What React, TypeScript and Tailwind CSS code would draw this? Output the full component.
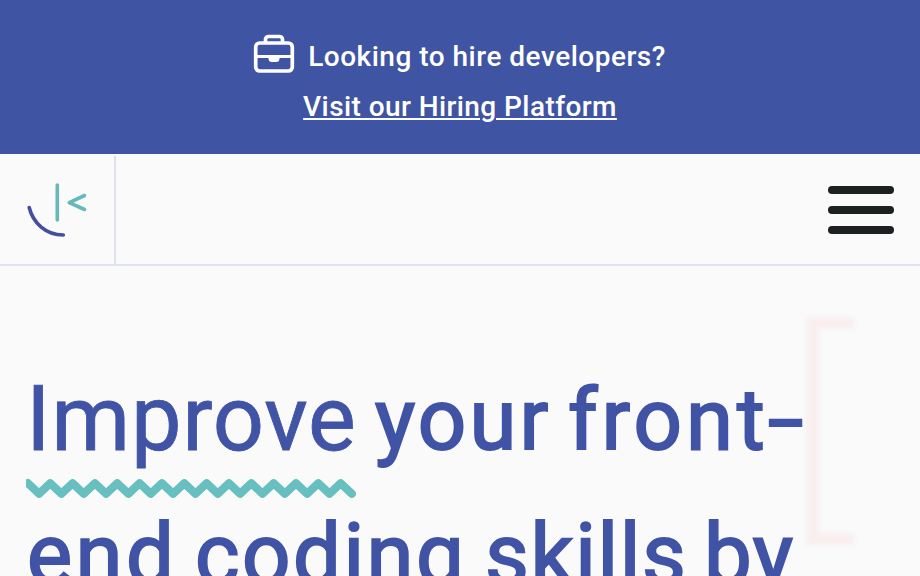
function Briefcase() {
  return (
    <svg className="relative -left-px top-px" width="42" height="40" viewBox="0 0 42 40" fill="none" stroke="white" strokeWidth="3.7" strokeLinejoin="round">
      <rect x="2.7" y="9" width="36.6" height="28" rx="4" />
      <path d="M12.5 9V5.5a3 3 0 0 1 3-3h11a3 3 0 0 1 3 3V9" />
      <path d="M2.7 22.5h36.6" strokeWidth="3" />
      <path d="M15.5 23h11v1.5a3.5 3.5 0 0 1-3.5 3.5h-4a3.5 3.5 0 0 1-3.5-3.5z" fill="white" stroke="none" />
    </svg>
  );
}

function Logo() {
  return (
    <svg className="block" width="114" height="108" viewBox="0 156 114 108" fill="none" strokeLinecap="round" strokeLinejoin="round" strokeWidth="3.6">
      <path d="M57.3 185V220" stroke="#67b8b9" />
      <path d="M84.5 195.5L69.3 202.7L84.5 209.5" stroke="#67b8b9" />
      <path d="M29.2 207.5C33 223 46 235 63.3 235" stroke="#434da2" />
    </svg>
  );
}

function ZigZag() {
  const points = Array.from({ length: 30 }, (_, i) => `${1.9 + i * 11.17},${i % 2 ? 15.7 : 5.2}`).join(' ');
  return (
    <svg className="absolute left-[26px] top-[212px]" width="331" height="22" viewBox="0 0 331 22">
      <polyline points={points} fill="none" stroke="#67bfc0" strokeWidth="8.2" strokeLinecap="round" strokeLinejoin="round" />
    </svg>
  );
}

export default function App() {
  return (
    <div className="h-[576px] w-full overflow-hidden bg-[#fafafb] font-['Roboto',sans-serif]">
      <div className="flex h-[154px] flex-col items-center bg-[#3f54a3] pt-[33px] font-medium text-white">
        <div className="flex h-[48px] items-start gap-[13px] text-[28px] leading-[48px] tracking-[0.5px]">
          <Briefcase />
          <span className="-ml-px">Looking to hire developers?</span>
        </div>
        <a className="text-[28px] leading-[52px] tracking-[0.42px] underline decoration-2 underline-offset-[2px]">Visit our Hiring Platform</a>
      </div>
      <header className="flex h-[112px] items-center justify-between border-b-2 border-[#dde3e8] pt-[2px]">
        <div className="h-full w-[116px] border-r-2 border-[#dde3e8]">
          <Logo />
        </div>
        <button className="mr-[26px] flex w-[66px] flex-col gap-3" aria-label="Menu">
          <span className="h-2 rounded-full bg-[#1d2021]" />
          <span className="h-2 rounded-full bg-[#1d2021]" />
          <span className="h-2 rounded-full bg-[#1d2021]" />
        </button>
      </header>
      <main className="relative h-[310px] overflow-hidden">
        <div className="absolute left-[806px] top-[51px] h-[228px] w-[48px] border-y-[12px] border-l-[13px] border-[#f9efef] blur-[2px]" />
        <h1 className="relative pt-[87px] text-[85px] leading-[135px] font-normal text-[#4053a4] [-webkit-text-stroke:2px_#4053a4]">
          <span className="flex h-[135px] whitespace-nowrap">
            <span className="-mt-px ml-[26px] w-[349px] text-[90px] tracking-[0.8px] [-webkit-text-stroke:0.8px_#4053a4]">Improve</span>
            <span className="w-[193px] tracking-[3.2px]">your</span>
            <span className="tracking-[4px]">front</span>
            <span className="-ml-px inline-block origin-left scale-x-[1.5]">-</span>
          </span>
          <span className="flex h-[135px] whitespace-nowrap">
            <span className="ml-[27px] w-[168px] tracking-[3.5px]">end</span>
            <span className="w-[290px] tracking-[2.5px]">coding</span>
            <span className="w-[219px] tracking-[1.6px]">skills</span>
            <span className="tracking-[1.5px]">by</span>
          </span>
        </h1>
        <ZigZag />
      </main>
    </div>
  );
}
